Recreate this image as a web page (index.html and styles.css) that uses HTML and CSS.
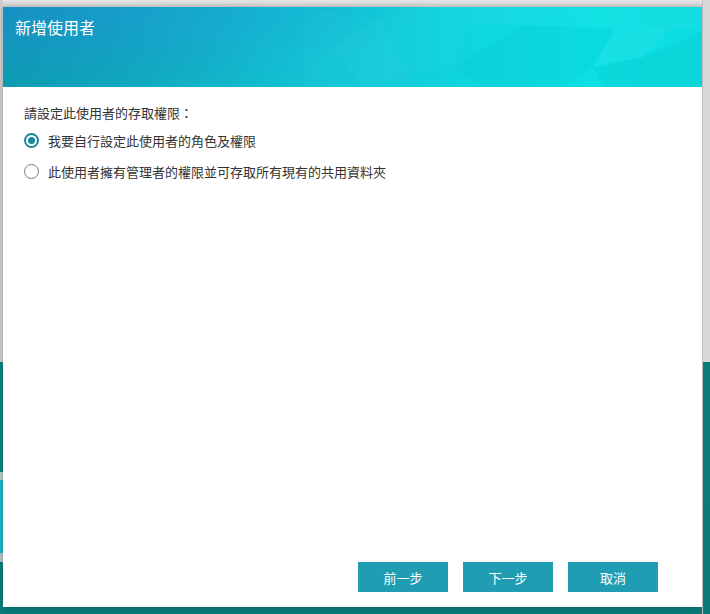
FILE: index.html
```html
<!DOCTYPE html>
<html lang="zh-Hant">
<head>
<meta charset="utf-8">
<title>新增使用者</title>
<link rel="stylesheet" href="styles.css">
</head>
<body>
<div class="desk">
  <div class="left-strip"></div>
  <div class="dialog">
    <div class="header">
      <svg class="facets" viewBox="0 0 699 80" preserveAspectRatio="none" aria-hidden="true">
        <polygon points="300,0 380,15 410,80 300,80" fill="#ffffff" opacity="0.02"/>
        <polygon points="395,0 470,0 450,60 360,80 330,40" fill="#ffffff" opacity="0.025"/>
        <polygon points="470,0 590,0 520,18 470,18" fill="#ffffff" opacity="0.04"/>
        <polygon points="520,18 612,22 590,60 560,80 480,80 450,60" fill="#000000" opacity="0.02"/>
        <polygon points="612,22 670,20 640,50 590,60" fill="#ffffff" opacity="0.05"/>
        <polygon points="590,0 699,0 699,25 670,20 612,22 520,18" fill="#ffffff" opacity="0.03"/>
        <polygon points="640,50 699,25 699,80 600,80 590,60" fill="#000000" opacity="0.03"/>
      </svg>
      <h1 class="title">新增使用者</h1>
    </div>
    <div class="content">
      <p class="prompt">請設定此使用者的存取權限：</p>
      <label class="option">
        <span class="radio checked"></span>
        <span class="label">我要自行設定此使用者的角色及權限</span>
      </label>
      <label class="option">
        <span class="radio"></span>
        <span class="label">此使用者擁有管理者的權限並可存取所有現有的共用資料夾</span>
      </label>
    </div>
    <div class="footer">
      <button class="btn">前一步</button>
      <button class="btn">下一步</button>
      <button class="btn">取消</button>
    </div>
  </div>
  <div class="right-strip"></div>
</div>
</body>
</html>
```

FILE: styles.css
```css
html, body {
  margin: 0;
  padding: 0;
}
body {
  width: 710px;
  height: 614px;
  overflow: hidden;
  font-family: "Noto Sans CJK TC", "Noto Sans", sans-serif;
  background:
    linear-gradient(to bottom, #e6e6e6 0, #d6d6d6 7px, rgba(214,214,214,0) 7px),
    linear-gradient(to bottom, #d9d9d9 0, #d9d9d9 362px, #0b7e7a 362px, #0a7a76 100%);
}
.desk {
  display: flex;
  align-items: flex-start;
  height: 614px;
}
.left-strip {
  width: 3px;
  height: 614px;
  flex: none;
  background: linear-gradient(to bottom,
    #d0d0d0 0, #d0d0d0 362px,
    #0b827e 362px, #0b827e 472px,
    #b9c9cb 472px, #b9c9cb 480px,
    #1ab7c9 480px, #1ab7c9 553px,
    #b8c4c4 553px, #b8c4c4 562px,
    #0a7f7b 562px, #0a7f7b 614px);
}
.right-strip {
  flex: 1;
  height: 614px;
  background: linear-gradient(to bottom,
    #d8d8d8 0, #d8d8d8 362px,
    #0b7c78 362px, #0a7a76 614px);
  border-left: 1px solid #bdbdbd;
  box-sizing: border-box;
}
.dialog {
  width: 699px;
  height: 600px;
  margin-top: 7px;
  flex: none;
  background: #ffffff;
  display: flex;
  flex-direction: column;
  box-shadow: 0 0 6px rgba(0,0,0,0.25);
}
.header {
  position: relative;
  height: 80px;
  flex: none;
  overflow: hidden;
  background:
    radial-gradient(ellipse 60% 110% at 0 0, rgba(30,100,200,0.35), rgba(30,100,200,0) 100%),
    radial-gradient(ellipse 45% 90% at 0 100%, rgba(0,140,140,0.3), rgba(0,140,140,0) 100%),
    linear-gradient(to right, #12a6c0 0%, #14b9cf 30%, #11c7d7 50%, #0ed7df 68%, #0be0e4 85%, #0cdce1 100%);
}
.facets {
  position: absolute;
  inset: 0;
  width: 100%;
  height: 100%;
}
.title {
  position: relative;
  margin: 0;
  padding: 9px 0 0 12px;
  font-size: 16px;
  line-height: 22px;
  font-weight: normal;
  color: #ffffff;
}
.content {
  flex: 1;
  padding: 16px 0 0 21px;
}
.prompt {
  margin: 0 0 2px 0;
  font-size: 13px;
  line-height: 20px;
  color: #333333;
}
.option {
  display: flex;
  align-items: center;
  gap: 9px;
  height: 31px;
  font-size: 13px;
  color: #333333;
}
.radio {
  box-sizing: border-box;
  width: 15px;
  height: 15px;
  border-radius: 50%;
  border: 1px solid #7a7a7a;
  display: flex;
  align-items: center;
  justify-content: center;
  flex: none;
}
.radio.checked {
  border: 2px solid #17879d;
}
.radio.checked::after {
  content: "";
  width: 7px;
  height: 7px;
  border-radius: 50%;
  background: #17879d;
}
.label {
  line-height: 20px;
}
.footer {
  display: flex;
  justify-content: flex-end;
  gap: 15px;
  padding: 0 44px 15px 0;
}
.btn {
  width: 90px;
  height: 30px;
  border: none;
  background: #219db3;
  color: #ffffff;
  font-family: "Noto Sans CJK TC", "Noto Sans", sans-serif;
  font-size: 13px;
  padding: 0;
  cursor: pointer;
}
```
